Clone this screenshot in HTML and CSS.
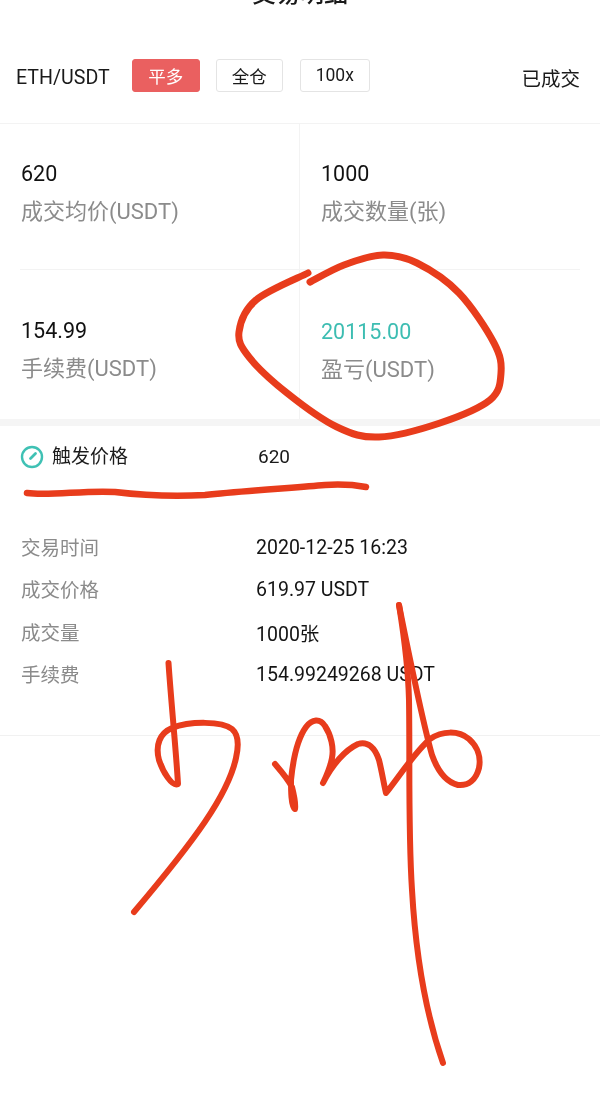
FILE: index.html
```html
<!DOCTYPE html>
<html lang="zh-CN">
<head>
<meta charset="utf-8">
<title>交易明细</title>
<link rel="stylesheet" href="styles.css">
</head>
<body>
<main class="page">
  <header class="title-bar"><h1 class="title">交易明细</h1></header>
  <section class="order-bar">
    <span class="pair">ETH/USDT</span>
    <span class="tag tag-red">平多</span>
    <span class="tag">全仓</span>
    <span class="tag tag-wide">100x</span>
    <span class="status">已成交</span>
  </section>
  <section class="stats">
    <div class="stat stat-top">
      <div class="stat-value">620</div>
      <div class="stat-label">成交均价(USDT)</div>
    </div>
    <div class="stat stat-top stat-right">
      <div class="stat-value">1000</div>
      <div class="stat-label">成交数量(张)</div>
    </div>
    <div class="stat stat-bottom">
      <div class="stat-value">154.99</div>
      <div class="stat-label">手续费(USDT)</div>
    </div>
    <div class="stat stat-bottom stat-right">
      <div class="stat-value stat-green">20115.00</div>
      <div class="stat-label">盈亏(USDT)</div>
    </div>
  </section>
  <section class="trigger">
    <div class="trigger-name">
      <svg class="gauge" viewBox="0 0 24 24" aria-hidden="true">
        <circle cx="12" cy="12" r="10" fill="none" stroke="#3fc1b4" stroke-width="2.4"/>
        <path d="M10.500 13.500 L15.500 8.500" fill="none" stroke="#3fc1b4" stroke-width="2.800" stroke-linecap="round"/>
      </svg>
      <span>触发价格</span>
    </div>
    <div class="trigger-value">620</div>
  </section>
  <section class="details">
    <div class="detail"><span class="detail-key">交易时间</span><span class="detail-value">2020-12-25 16:23</span></div>
    <div class="detail"><span class="detail-key">成交价格</span><span class="detail-value">619.97 USDT</span></div>
    <div class="detail"><span class="detail-key">成交量</span><span class="detail-value">1000张</span></div>
    <div class="detail"><span class="detail-key">手续费</span><span class="detail-value">154.99249268 USDT</span></div>
  </section>
  <svg class="ink" viewBox="0 0 600 1120" aria-hidden="true">
    <path class="ink-thick" d="M310 282 C316 279 332 269.500 344 265 C356 260.500 371 255.300 383 255 C395 254.700 404.300 256.700 417 263 C429.700 269.300 446.200 279.700 459 293 C471.800 306.300 487 329.700 494 343 C501 356.300 501.700 363.500 501 373 C500.300 382.500 500.200 391.700 490 400 C479.800 408.300 458.500 416.800 440 423 C421.500 429.200 396.200 436.300 379 437 C361.800 437.700 352.300 434.300 337 427 C321.700 419.700 301.700 404.700 287 393 C272.300 381.300 257 367.200 249 357 C241 346.800 237.800 341.500 239 332 C240.200 322.500 244.500 309.800 256 300 C267.500 290.200 299.300 277.500 308 273"/>
    <path class="ink-under" d="M27 493 C50 496 85 490 115 492 C140 495 165 497 205 495 C240 491 290 488 325 485 C340 484 355 485 366 487"/>
    <path class="ink-thin" d="M168.500 663 C171 700 176 750 178 784 C172 787 163 772 159 760 C155 745 160 733 172 728 C190 721 222 721 232 729 C239 735 239 745 236 758 C228 795 195 840 134 912"/>
    <path class="ink-thin" d="M275 764 C281 771 288 779 292 787 C294 795 296 803 295 809 C291 806 291 790 291 780 C293 760 298 738 306 727 C312 719 320 718 325 726 C331 735 334 748 332 758 C330 768 326 777 323 783 C332 765 345 750 358 744 C368 741 375 748 379 760 C382 772 384 785 386 793 C398 778 415 752 430 739 C442 731 458 730 469 739 C478 747 481 758 479 768 C476 780 468 786 458 785 C446 782 438 772 432 755 C425 730 410 660 399 605"/>
    <path class="ink-thin" d="M399 605 C403 630 408 660 409 700 C410 760 408 830 412 890 C416 960 428 1020 443 1063"/>
  </svg>
</main>
</body>
</html>
```
FILE: styles.css
```css
* { box-sizing: border-box; margin: 0; padding: 0; }
html, body { background: #fff; }
body {
  font-family: Roboto, "Noto Sans CJK SC", "Liberation Sans", sans-serif;
  color: #1a1a1a;
}
.page {
  position: relative;
  width: 600px;
  height: 1120px;
  overflow: hidden;
  background: #fff;
  filter: blur(0.35px);
}
.title-bar {
  height: 6px;
  display: flex;
  justify-content: center;
  align-items: flex-end;
  overflow: hidden;
}
.title {
  font-size: 24px;
  font-weight: 500;
  line-height: 24px;
  flex: none;
}
.order-bar {
  height: 118px;
  padding: 21px 20px 0 16px;
  display: flex;
  align-items: center;
  border-bottom: 1px solid #f3f3f3;
}
.pair {
  font-size: 19.600px;
  padding-top: 5px;
  margin-right: 22px;
}
.tag {
  width: 67px;
  height: 33px;
  margin-right: 17px;
  display: flex;
  align-items: center;
  justify-content: center;
  font-size: 17.500px;
  background: #fff;
  border: 1px solid #e4e4e4;
  border-radius: 3px;
}
.tag-red {
  width: 68px;
  margin-right: 16px;
  background: #ea6060;
  border-color: #ea6060;
  color: #fff;
}
.tag-wide { width: 70px; }
.status {
  margin-left: auto;
  font-size: 19.500px;
  padding-top: 5px;
}
.stats {
  display: grid;
  grid-template-columns: 299px 301px;
  grid-template-rows: 145px 150px;
}
.stat { padding: 36px 21px 0; }
.stat-right { border-left: 1px solid #f3f3f3; }
.stat-bottom { position: relative; padding-top: 48px; }
.stat-bottom.stat-right { padding-top: 49px; }
.stat-bottom::before {
  content: "";
  position: absolute;
  top: 0;
  height: 1px;
  background: #f3f3f3;
  left: 20px;
  right: 0;
}
.stat-right.stat-bottom::before { left: 0; right: 20px; }
.stat-value {
  font-size: 21.500px;
  line-height: 28px;
  color: #111;
}
.stat-green { color: #3dbdb2; }
.stat-label {
  font-size: 22px;
  line-height: 28px;
  margin-top: 10px;
  color: #8b8b8b;
}
.trigger {
  border-top: 7px solid #f5f5f5;
  height: 70px;
  padding: 18px 0 0 20px;
  display: flex;
  align-items: flex-start;
}
.trigger-name {
  width: 238px;
  display: flex;
  align-items: center;
  gap: 8px;
  font-size: 19px;
  line-height: 26px;
}
.gauge { width: 24px; height: 24px; flex: none; }
.trigger-value {
  font-size: 19px;
  line-height: 26px;
}
.details {
  padding: 44px 0 48px 21px;
  border-bottom: 1px solid #f1f1f1;
  display: flex;
  flex-direction: column;
  gap: 16px;
}
.detail {
  display: flex;
  height: 26.500px;
  align-items: center;
  font-size: 19.500px;
}
.detail-key {
  width: 235px;
  color: #8b8b8b;
}
.detail-value {
  color: #141414;
  padding-top: 2px;
}
.ink {
  position: absolute;
  inset: 0;
  width: 600px;
  height: 1120px;
  fill: none;
  stroke: #e83c1c;
  stroke-linecap: round;
  stroke-linejoin: round;
}
.ink-thick { stroke-width: 7px; }
.ink-under { stroke-width: 6.500px; }
.ink-thin { stroke-width: 6px; }
```
